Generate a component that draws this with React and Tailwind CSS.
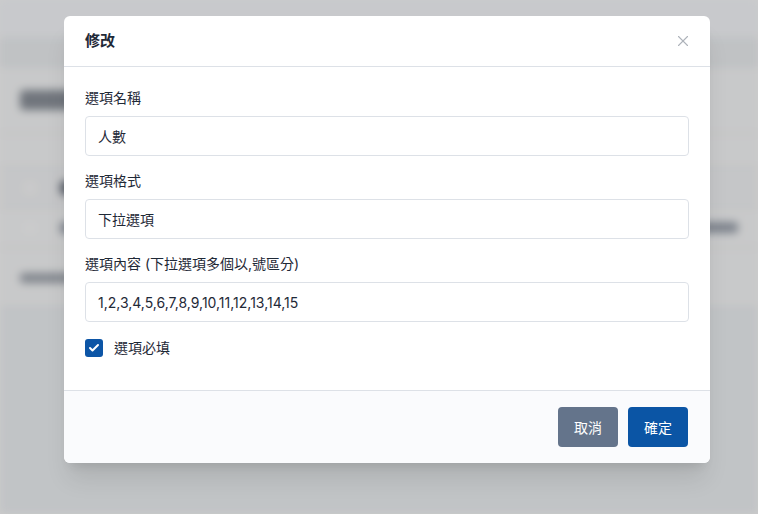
import { X, Check } from 'lucide-react'

const font = { fontFamily: 'Inter, "Noto Sans CJK TC", "Noto Sans", sans-serif' }

function Field({ label, value }) {
  return (
    <div className="flex flex-col gap-2">
      <label className="text-[14px] leading-5 text-[#1f2937]">{label}</label>
      <div className="flex h-10 items-center rounded border border-[#dde1e7] bg-white px-3 text-[14px] text-[#1f2937]">
        {value}
      </div>
    </div>
  )
}

// blurred page behind the dialog, text drawn as blocks since it is unreadable
function BackPage() {
  return (
    <div className="absolute inset-0 bg-[#f2f5f8] blur-[4px]" aria-hidden="true">
      <div className="h-[38px] bg-[#fafcff]" />
      <div className="h-[28px] bg-[#f0f3f6] shadow-sm" />
      <div className="border-y border-[#e3e7ec] bg-[#fbfcfd]">
        <div className="flex h-[66px] items-center px-5">
          <span className="h-[20px] w-[90px] rounded bg-[#8d939c]" />
        </div>
        <div className="h-[34px] border-t border-[#e5e7eb]" />
        <div className="flex h-[40px] items-center gap-6 border-t border-[#e5e7eb] bg-[#f7f8fa] px-6">
          <span className="h-3 w-3 rounded-full bg-white" />
          <span className="h-[14px] w-[30px] rounded bg-[#6b7280]" />
        </div>
        <div className="flex h-[40px] items-center gap-6 border-t border-[#e5e7eb] px-6">
          <span className="h-3 w-3 rounded-full bg-white" />
          <span className="h-[12px] w-[14px] rounded bg-[#9ca3af]" />
          <span className="ml-auto mr-[-4px] h-[11px] w-[40px] rounded bg-[#9ca3af]" />
        </div>
        <div className="flex h-[60px] items-center border-t border-[#e5e7eb] px-5">
          <span className="h-[10px] w-[60px] rounded bg-[#a1a7b0]" />
        </div>
      </div>
    </div>
  )
}

export default function App() {
  return (
    <div className="relative h-[514px] w-[758px] overflow-hidden" style={font}>
      <BackPage />
      <div className="absolute inset-0 bg-black/20" />
      <div className="relative flex pt-4 pl-16">
        <div className="w-[646px] overflow-hidden rounded-md bg-white shadow-xl">
          <div className="flex h-[51px] items-center justify-between border-b border-[#dde1e7] pl-[21px] pr-[18px]">
            <h2 className="text-[15px] font-bold text-[#1f2937]">修改</h2>
            <X className="h-[18px] w-[18px] text-[#aeb3ba]" strokeWidth={1.5} />
          </div>
          <div className="flex flex-col gap-[15px] px-[21px] pt-[21px] pb-[32px]">
            <Field label="選項名稱" value="人數" />
            <Field label="選項格式" value="下拉選項" />
            <Field label="選項內容 (下拉選項多個以,號區分)" value="1,2,3,4,5,6,7,8,9,10,11,12,13,14,15" />
            <div className="flex items-center gap-[11px]">
              <span className="flex h-[18px] w-[18px] items-center justify-center rounded-[3px] bg-[#0c55a6]">
                <Check className="h-3 w-3 text-white" strokeWidth={4} />
              </span>
              <span className="text-[14px] text-[#1f2937]">選項必填</span>
            </div>
          </div>
          <div className="flex justify-end gap-[10px] border-t border-[#dde1e7] bg-[#fafbfd] px-[22px] py-4">
            <button className="h-10 w-[60px] rounded bg-[#64748b] text-[14px] text-white">取消</button>
            <button className="h-10 w-[60px] rounded bg-[#0b55a5] text-[14px] text-white">確定</button>
          </div>
        </div>
      </div>
    </div>
  )
}
